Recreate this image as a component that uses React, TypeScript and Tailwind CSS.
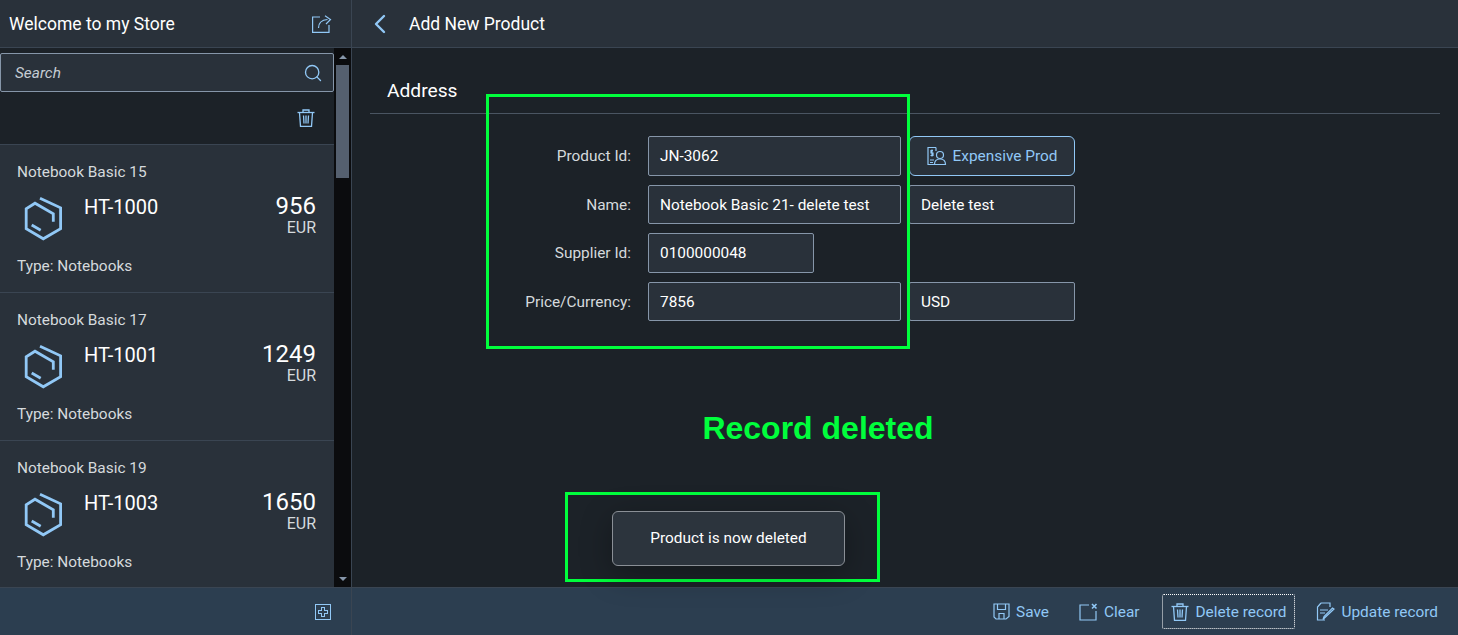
import { ChevronLeft, Search } from "lucide-react";

const ShareIcon = () => (
  <svg width="20" height="18" viewBox="0 0 20 18" fill="none" stroke="#91c8f6" strokeWidth="1.2" className="block">
    <path d="M8 2H0.6V17.4H17V10" />
    <path d="M6.5 13C6.5 8.5 9 5 15.5 4.5" />
    <path d="M13 0.8L18.5 4.5L14 9" />
  </svg>
);

const TrashIcon = () => (
  <svg width="18" height="18" viewBox="0 0 18 18" fill="none" stroke="#91c8f6" strokeWidth="1.3" className="block">
    <path d="M0.5 3.5H17.5" />
    <path d="M6 3V1H12V3" />
    <path d="M2.5 3.5L3.5 17.3H14.5L15.5 3.5" />
    <path d="M6.5 6.5L7 14.5M9 6.5V14.5M11.5 6.5L11 14.5" />
  </svg>
);

const BoxIcon = () => (
  <svg width="42" height="46" viewBox="0 0 42 46" fill="none" stroke="#91c8f6" strokeWidth="2.8" className="block">
    <path d="M17 2.2L37.6 11.8V32.8L20.3 42.8L3.2 32.8V12.8L12 7.2L30.3 17.8V25.7" />
    <path d="M8.7 29L17.7 34.2" />
  </svg>
);

const products = [
  { name: "Notebook Basic 15", id: "HT-1000", price: "956" },
  { name: "Notebook Basic 17", id: "HT-1001", price: "1249" },
  { name: "Notebook Basic 19", id: "HT-1003", price: "1650" },
];

const ProductRow = ({ name, id, price }: { name: string; id: string; price: string }) => (
  <div className="h-[148px] shrink-0 border-b border-[#3a4552] bg-[#29313a] pl-[17px] pr-[18px] pt-[18px]">
    <div className="text-[15.4px] leading-[18px] text-[#d5dadd]">{name}</div>
    <div className="mt-[6px] flex h-[62px] items-start">
      <div className="ml-[6px] mt-[9px]">
        <BoxIcon />
      </div>
      <div className="ml-[19px] mt-[7px] text-[20px] leading-[26px] text-white">{id}</div>
      <div className="ml-auto pt-[5px] text-right">
        <div className="text-[24px] leading-[28px] text-white">{price}</div>
        <div className="text-[16px] leading-[16px] text-[#d5dadd]">EUR</div>
      </div>
    </div>
    <div className="mt-[8px] text-[15.4px] leading-[18px] text-[#d5dadd]">Type: Notebooks</div>
  </div>
);

const Field = ({ value, className }: { value: string; className: string }) => (
  <div className={`flex items-center rounded-[2px] border border-[#8696a9] bg-[#29313a] px-[11px] pt-[2px] text-[15.4px] text-white ${className}`}>
    {value}
  </div>
);

const Label = ({ text }: { text: string }) => (
  <div className="flex items-center justify-end pr-[9px] pt-[2px] text-[15.4px] text-[#d5dadd]">{text}</div>
);

const FooterButton = ({ icon, text, focused }: { icon: React.ReactNode; text: string; focused?: boolean }) => (
  <div
    className={`flex h-[35px] items-center gap-[6px] px-2 text-[15.4px] text-[#91c8f6] ${
      focused ? "-mr-px ml-px rounded-[2px] border border-dotted border-white" : ""
    }`}
  >
    {icon}
    <span className="pt-[2px]">{text}</span>
  </div>
);

export default function App() {
  return (
    <div className="flex h-[635px] w-[1458px] overflow-hidden bg-[#1c2228] font-['Roboto',sans-serif]">
      {/* master */}
      <aside className="flex w-[352px] shrink-0 flex-col border-r border-[#3a4552]">
        <header className="flex h-[48px] shrink-0 items-center justify-between border-b border-[#3a4552] bg-[#29313a] pl-[9px] pr-[19px]">
          <span className="pt-[2px] text-[17.5px] text-white">Welcome to my Store</span>
          <ShareIcon />
        </header>
        <div className="flex min-h-0 flex-1">
          <div className="flex w-[334px] flex-col overflow-hidden">
            <div className="flex h-[97px] shrink-0 flex-col border-b border-[#3a4552] bg-[#1c2228] pt-[5px]">
              <div className="flex h-[39px] shrink-0 items-center justify-between rounded-[2px] border border-[#8696a9] bg-[#29313a] pl-[14px] pr-[10px]">
                <span className="pt-[2px] text-[15.4px] italic text-[#c5ccd3]">Search</span>
                <Search size={20} strokeWidth={1.6} color="#91c8f6" />
              </div>
              <div className="flex flex-1 items-center justify-end pr-[19px]">
                <TrashIcon />
              </div>
            </div>
            {products.map((p) => (
              <ProductRow key={p.id} {...p} />
            ))}
          </div>
          <div className="flex w-[17px] shrink-0 flex-col items-center bg-[#0b0c0e]">
            <div className="mt-[7px] h-0 w-0 border-x-4 border-b-4 border-x-transparent border-b-[#8696a9]" />
            <div className="mt-[6px] h-[113px] w-[13px] bg-[#55606f]" />
            <div className="mt-auto mb-[6px] h-0 w-0 border-x-4 border-t-4 border-x-transparent border-t-[#8696a9]" />
          </div>
        </div>
        <footer className="flex h-[48px] shrink-0 items-center justify-end border-t border-[#3a4552] bg-[#2c3e50] pr-[20px]">
          <svg width="16" height="16" viewBox="0 0 16 16" fill="none" stroke="#91c8f6" strokeWidth="1" shapeRendering="crispEdges" className="block">
            <rect x="0.5" y="0.5" width="15" height="15" />
            <path d="M6.5 3.5H9.5V6.5H12.5V9.5H9.5V12.5H6.5V9.5H3.5V6.5H6.5Z" />
          </svg>
        </footer>
      </aside>

      {/* detail */}
      <main className="relative flex min-w-0 flex-1 flex-col">
        <header className="flex h-[48px] shrink-0 items-center border-b border-[#3a4552] bg-[#29313a] pl-[12px]">
          <ChevronLeft size={32} strokeWidth={1.8} color="#91c8f6" />
          <span className="ml-[13px] pt-[2px] text-[17.5px] text-white">Add New Product</span>
        </header>
        <section className="flex min-h-0 flex-1 flex-col pl-[18px] pr-[18px]">
          <div className="mt-[28px] h-[38px] border-b border-[#4a5562] pl-[17px] text-[19.2px] leading-[30px] text-white">
            Address
          </div>
          <div className="mt-[22px] grid grid-cols-[270px_253px_166px] grid-rows-[40px_39px_40px_39px] gap-x-2 gap-y-[9px]">
            <Label text="Product Id:" />
            <Field value="JN-3062" className="" />
            <div className="flex items-center justify-center gap-[6px] rounded-[6px] border border-[#91c8f6] bg-[#29313a] text-[15.4px] text-[#91c8f6]">
              <svg width="20" height="20" viewBox="0 0 20 20" fill="none" stroke="#91c8f6" strokeWidth="1.2" className="block">
                <path d="M9 1.5H1V18.5H8" />
                <path d="M9 1.5V5" />
                <path d="M3 14H7M3 16.5H6" />
                <circle cx="13" cy="9" r="3.5" />
                <path d="M7.5 18.5C7.5 14.5 10 13 13 13C16 13 18.5 14.5 18.5 18.5Z" />
                <path d="M6 4.5H4V7H6V9.5H3.5M5 3.5V10.5" />
              </svg>
              <span className="pt-[2px]">Expensive Prod</span>
            </div>
            <Label text="Name:" />
            <Field value="Notebook Basic 21- delete test" className="" />
            <Field value="Delete test" className="" />
            <Label text="Supplier Id:" />
            <Field value="0100000048" className="w-[166px]" />
            <div />
            <Label text="Price/Currency:" />
            <Field value="7856" className="" />
            <Field value="USD" className="" />
          </div>
          <div className="mt-[88px] pr-[174px] text-center font-['Liberation_Sans',sans-serif] text-[32px] font-bold leading-[38px] text-[#00ff3c]">
            Record deleted
          </div>
        </section>
        <footer className="flex h-[48px] shrink-0 items-center justify-end gap-[14px] border-t border-[#3a4552] bg-[#2c3e50] pr-[12px]">
          <FooterButton
            text="Save"
            icon={
              <svg width="17" height="17" viewBox="0 0 17 17" fill="none" stroke="#91c8f6" strokeWidth="1.2" className="block">
                <path d="M1 1H16V13.5L13 16H3L1 14Z" />
                <path d="M4.5 1V6.5H12.5V1" />
                <path d="M6 16V10.5H11V16" />
              </svg>
            }
          />
          <FooterButton
            text="Clear"
            icon={
              <svg width="19" height="18" viewBox="0 0 19 18" fill="none" stroke="#91c8f6" strokeWidth="1.2" className="block">
                <path d="M10 2H1V17H17V8" />
                <path d="M13 1L17.5 5.5M17.5 1L13 5.5" strokeWidth="1.6" />
              </svg>
            }
          />
          <FooterButton text="Delete record" focused icon={<TrashIcon />} />
          <FooterButton
            text="Update record"
            icon={
              <svg width="19" height="19" viewBox="0 0 19 19" fill="none" stroke="#91c8f6" strokeWidth="1.2" className="block">
                <path d="M5 1H14V5M5 1L1.5 5V18H9" />
                <path d="M4 8H12M4 11H9" />
                <path d="M18 7L9 15.5L7 17.5L8 14.5L16.5 6Z" />
              </svg>
            }
          />
        </footer>

        {/* annotations and toast lie over the page */}
        <div className="absolute left-[134px] top-[94px] h-[255px] w-[424px] border-[3px] border-[#00ff3c]" />
        <div className="absolute left-[213px] top-[492px] h-[90px] w-[315px] border-[3px] border-[#00ff3c]" />
        <div className="absolute left-[260px] top-[511px] flex h-[55px] w-[233px] items-center justify-center rounded-[6px] border border-[#8a8f96] bg-[#2c343d] text-[15.4px] text-white shadow-[0_8px_32px_rgba(0,0,0,0.3)]">
          Product is now deleted
        </div>
      </main>
    </div>
  );
}
